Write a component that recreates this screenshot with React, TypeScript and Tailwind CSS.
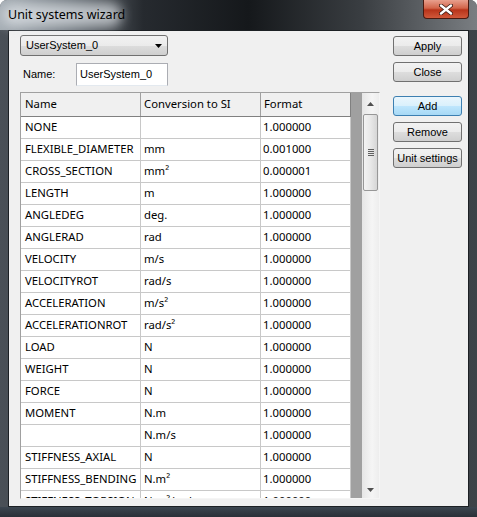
import React from 'react';

type Row = [string, string, string];

const rows: Row[] = [
  ['NONE', '', '1.000000'],
  ['FLEXIBLE_DIAMETER', 'mm', '0.001000'],
  ['CROSS_SECTION', 'mm²', '0.000001'],
  ['LENGTH', 'm', '1.000000'],
  ['ANGLEDEG', 'deg.', '1.000000'],
  ['ANGLERAD', 'rad', '1.000000'],
  ['VELOCITY', 'm/s', '1.000000'],
  ['VELOCITYROT', 'rad/s', '1.000000'],
  ['ACCELERATION', 'm/s²', '1.000000'],
  ['ACCELERATIONROT', 'rad/s²', '1.000000'],
  ['LOAD', 'N', '1.000000'],
  ['WEIGHT', 'N', '1.000000'],
  ['FORCE', 'N', '1.000000'],
  ['MOMENT', 'N.m', '1.000000'],
  ['', 'N.m/s', '1.000000'],
  ['STIFFNESS_AXIAL', 'N', '1.000000'],
  ['STIFFNESS_BENDING', 'N.m²', '1.000000'],
  ['STIFFNESS_TORSION', 'N.m²/rad', '1.000000'],
];

const uiFont = { fontFamily: '"Liberation Sans", Arial, sans-serif' };
const gridFont = { fontFamily: '"Noto Sans", "Open Sans", sans-serif' };

function WinButton({ label, focused = false }: { label: string; focused?: boolean }) {
  return (
    <div
      className={
        'flex h-[20px] w-[69px] items-center justify-center rounded-[3px] border text-[11px] text-black ' +
        (focused
          ? 'border-[#3c7fb1] bg-[linear-gradient(#eaf6fd_0%,#d9f0fc_50%,#bee6fd_51%,#a7d9f5_100%)]'
          : 'border-[#707070] bg-[linear-gradient(#f2f2f2_0%,#ebebeb_50%,#dddddd_51%,#cfcfcf_100%)]')
      }
      style={uiFont}
    >
      {label}
    </div>
  );
}

function ScrollArrow({ down = false }: { down?: boolean }) {
  return (
    <svg width="7" height="4" viewBox="0 0 7 4">
      <path d={down ? 'M0 0H7L3.5 4Z' : 'M0 4H7L3.5 0Z'} fill="#505050" />
    </svg>
  );
}

function Grid() {
  return (
    <div className="flex h-[407px] w-[360px] overflow-hidden border border-t-[#a0a0a0] border-l-[#a0a0a0] border-b-[#f5f5f5] border-r-[#f5f5f5] bg-white" style={gridFont}>
      <div className="flex w-[330px] flex-col">
        <div className="flex h-[24px] shrink-0 border-b border-[#808080] bg-[#f0f0f0] text-[11.3px] text-black">
          <div className="flex w-[120px] items-center border-r border-[#a0a0a0] pl-[4px]">Name</div>
          <div className="flex w-[120px] items-center border-r border-[#a0a0a0] pl-[3px]">Conversion to SI</div>
          <div className="flex w-[90px] items-center border-r border-[#808080] pl-[3px]">Format</div>
        </div>
        {rows.map((r, i) => (
          <div key={i} className="flex h-[22px] shrink-0 border-b border-[#c8c8c8] text-[11.3px] text-black">
            <div className="flex w-[120px] items-center border-r border-[#c8c8c8] pl-[4px] whitespace-nowrap">{r[0]}</div>
            <div className="flex w-[120px] items-center border-r border-[#c8c8c8] pl-[3px] whitespace-nowrap">{r[1]}</div>
            <div className="flex w-[90px] items-center border-r border-[#c8c8c8] pl-[2px]">{r[2]}</div>
          </div>
        ))}
      </div>
      <div className="w-[11px] shrink-0 bg-[#a0a0a0]" />
      <div className="flex w-[17px] shrink-0 flex-col bg-[linear-gradient(90deg,#e6e6e6,#f5f5f5_60%,#ededed)]">
        <div className="flex h-[21px] shrink-0 items-center justify-center">
          <ScrollArrow />
        </div>
        <div className="mx-[1px] flex h-[77px] shrink-0 items-center justify-center rounded-[2px] border border-[#979797] bg-[linear-gradient(90deg,#f3f3f3,#e8e8e8_50%,#d6d6d6)]">
          <div className="flex flex-col gap-[1px]">
            <div className="h-px w-[6px] bg-[#606060]" />
            <div className="h-px w-[6px] bg-[#606060]" />
            <div className="h-px w-[6px] bg-[#606060]" />
            <div className="h-px w-[6px] bg-[#606060]" />
          </div>
        </div>
        <div className="flex-1" />
        <div className="flex h-[17px] shrink-0 items-center justify-center">
          <ScrollArrow down />
        </div>
      </div>
    </div>
  );
}

export default function App() {
  return (
    <div className="flex h-[517px] w-[477px] flex-col overflow-hidden rounded-t-[7px] bg-[linear-gradient(90deg,#4a5057,#33383d_30%,#2a2e33_60%,#3e4348)]">
      {/* title bar */}
      <div className="relative flex h-[30px] shrink-0 bg-[linear-gradient(90deg,#a5adb4_0%,#6f777e_14%,#262a2f_30%,#15181b_52%,#3a3e42_76%,#7a7e82_100%)]">
        <div className="absolute left-[2px] top-[3px] h-[24px] w-[120px] rounded-full bg-[#e4e8ec] opacity-70 blur-[6px]" />
        <div className="relative pl-[8px] pt-[6px] text-[12.5px] text-black" style={gridFont}>
          Unit systems wizard
        </div>
        <div className="absolute right-[8px] top-0 flex h-[19px] w-[46px] items-center justify-center rounded-b-[4px] border border-t-0 border-[#4a1a10] bg-[linear-gradient(#e8a08e_0%,#d2654a_45%,#b8341a_55%,#d0583a_100%)]">
          <svg width="14" height="11" viewBox="0 0 14 11">
            <path d="M2 1.5L12 9.5M12 1.5L2 9.5" stroke="#3a1a12" strokeWidth="4" strokeLinecap="round" />
            <path d="M2 1.5L12 9.5M12 1.5L2 9.5" stroke="#ffffff" strokeWidth="2.4" strokeLinecap="round" />
          </svg>
        </div>
      </div>

      {/* client area */}
      <div className="mx-[8px] flex h-[477px] shrink-0 border border-[#1c2024] bg-[#f0f0f0]">
        <div className="flex flex-col pl-[11px] pt-[4px]">
          <div
            className="flex h-[21px] w-[148px] items-center justify-between rounded-[3px] border border-[#707070] bg-[linear-gradient(#f2f2f2_0%,#ebebeb_50%,#dddddd_51%,#cfcfcf_100%)] pl-[5px] pr-[5px] text-[11px] text-black"
            style={uiFont}
          >
            <span>UserSystem_0</span>
            <svg width="7" height="4" viewBox="0 0 7 4">
              <path d="M0 0H7L3.5 4Z" fill="#000" />
            </svg>
          </div>
          <div className="mt-[7px] flex h-[23px] items-center text-[11px] text-black" style={uiFont}>
            <span className="ml-[3px] w-[53px]">Name:</span>
            <div className="flex h-[23px] w-[92px] items-center border border-[#abadb3] border-t-[#abadb3] border-b-[#e3e9ef] bg-white pl-[3px]">
              UserSystem_0
            </div>
          </div>
          <div className="mt-[6px]">
            <Grid />
          </div>
        </div>

        <div className="ml-[13px] flex flex-col pt-[5px]">
          <WinButton label="Apply" />
          <div className="mt-[6px]">
            <WinButton label="Close" />
          </div>
          <div className="mt-[14px]">
            <WinButton label="Add" focused />
          </div>
          <div className="mt-[6px]">
            <WinButton label="Remove" />
          </div>
          <div className="mt-[6px]">
            <WinButton label="Unit settings" />
          </div>
        </div>
      </div>
      <div className="flex-1 bg-[linear-gradient(#3c4650,#2a3038)]" />
    </div>
  );
}
